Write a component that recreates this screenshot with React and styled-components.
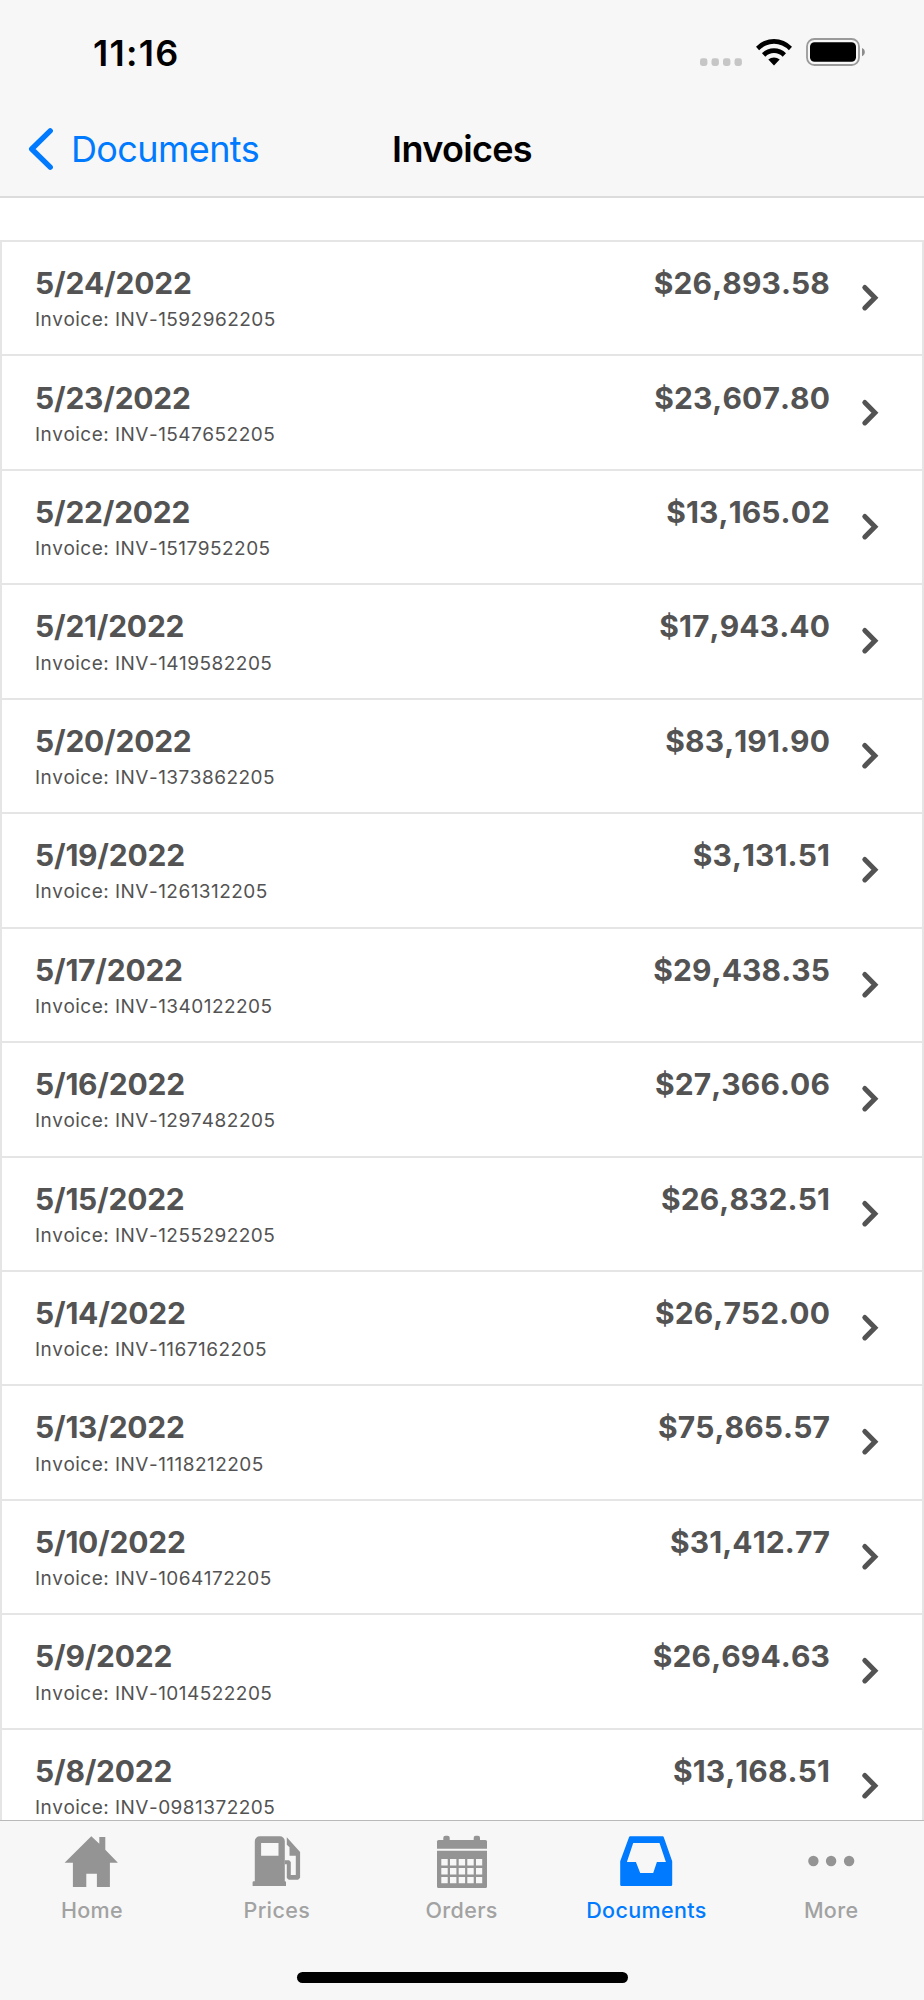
import React from 'react';
import styled, { createGlobalStyle } from 'styled-components'

const GlobalStyle = createGlobalStyle`
  * {
    box-sizing: border-box;
  }
  body {
    margin: 0;
    background: #ffffff;
    font-family: Inter, "Liberation Sans", sans-serif;
  }
`

const Screen = styled.div`
  display: flex;
  flex-direction: column;
  width: 924px;
  height: 2000px;
  overflow: hidden;
`

const Header = styled.header`
  flex-shrink: 0;
  height: 198px;
  background: #f7f7f7;
  border-bottom: 2px solid #dcdcdc;
`

const StatusBar = styled.div`
  display: flex;
  justify-content: space-between;
  align-items: flex-start;
  height: 97px;
  padding: 31px 59px 0 93px;
`

const Time = styled.span`
  font-size: 36px;
  line-height: 44px;
  font-weight: 600;
  letter-spacing: 1.25px;
  color: #000000;
`

const StatusIcons = styled.div`
  display: flex;
  gap: 14px;
  padding-top: 7px;
`

const NavBar = styled.nav`
  display: grid;
  grid-template-columns: 1fr auto 1fr;
  align-items: start;
  padding: 30px 27px 0;
`

const BackButton = styled.a`
  display: flex;
  gap: 18px;
  color: #007aff;
  font-size: 36px;
  line-height: 44px;
  letter-spacing: -0.62px;
`

const Title = styled.h1`
  margin: 0;
  font-size: 36px;
  line-height: 44px;
  font-weight: 600;
  letter-spacing: -0.68px;
  color: #000000;
`

const List = styled.ul`
  flex: 1;
  min-height: 0;
  overflow: hidden;
  margin: 0;
  padding: 42px 0 0;
  list-style: none;
  background: #ffffff;
  font-kerning: none;
`

const Row = styled.li`
  display: flex;
  align-items: flex-start;
  height: 114.45px;
  padding: 23.1px 42px 0 33px;
  border: 2px solid #e5e5e5;
  border-bottom: none;
  color: #535353;
`

const Info = styled.div`
  display: flex;
  flex-direction: column;
  flex-grow: 1;
`

const InvoiceDate = styled.span`
  font-size: 30px;
  line-height: 36px;
  font-weight: 650;
  letter-spacing: -0.22px;
`

const InvoiceNumber = styled.span`
  margin-top: 7.2px;
  font-size: 19px;
  line-height: 24px;
  letter-spacing: 0.47px;
`

const Amount = styled.span`
  font-size: 30px;
  line-height: 36px;
  font-weight: 650;
  letter-spacing: 0.1px;
`

const RowArrow = styled.svg`
  flex-shrink: 0;
  width: 20px;
  height: 36px;
  margin: 15px 0 0 30px;
`

const Footer = styled.footer`
  display: flex;
  flex-direction: column;
  justify-content: space-between;
  align-items: center;
  flex-shrink: 0;
  height: 180px;
  padding-bottom: 17px;
  background: #f7f7f7;
  border-top: 1px solid #b9b9b9;
`

const Tabs = styled.div`
  display: grid;
  grid-template-columns: repeat(5, 1fr);
  width: 100%;
  padding-top: 11px;
`

const Tab = styled.a`
  display: flex;
  flex-direction: column;
  align-items: center;
  gap: 7px;
  color: ${props => props.$active ? '#007aff' : '#949494'};
`

const TabLabel = styled.span`
  margin-right: 0.8px;
  font-size: 21.5px;
  line-height: 26px;
  font-weight: 500;
  letter-spacing: 0.36px;
  color: ${props => props.$active ? '#007aff' : '#a2a2a2'};
`

const HomeIndicator = styled.div`
  width: 331px;
  height: 11px;
  border-radius: 6px;
  background: #000000;
`

const TabSvg = ({ children }) => (
  <svg width="60" height="58" viewBox="0 0 60 58" fill="currentColor">{children}</svg>
)

const HomeIcon = () => (
  <TabSvg>
    <path d="M29.3 4.3 37.3 11.7V5h6v12.7L55.9 30.7h-8V55h-13V41.7H24.3V55H10.9V30.7H2.6Z" />
  </TabSvg>
)

const PumpIcon = () => (
  <TabSvg>
    <path
      fillRule="evenodd"
      d="M12.8 4.3h20a5 5 0 0 1 5 5v40h.3a1 1 0 0 1 .9 1V54H5.6v-3.7a1 1 0 0 1 1-1h1.2v-40a5 5 0 0 1 5-5ZM14.1 11v12.7h17.4V11Z"
    />
    <path d="M39.8 5.3 53.1 20v25.7l-2 2h-9.3l-2-1.7V32.3h-2v-4h4.3l1.7 1.7v13h5V23.7h-6.3V15.3l-2.7-2.6Z" />
  </TabSvg>
)

const CalendarIcon = () => (
  <TabSvg>
    <path d="M11.3 9V5.7a2 2 0 0 1 2-2h2.4a2 2 0 0 1 2 2V9ZM41.7 9V5.7a2 2 0 0 1 2-2H46a2 2 0 0 1 2 2V9Z" />
    <path d="M6.5 8h47A1.5 1.5 0 0 1 55 9.5v7.2H5V9.5A1.5 1.5 0 0 1 6.5 8Z" />
    <path
      fillRule="evenodd"
      d="M5 18.7h50v35.8a1.5 1.5 0 0 1-1.5 1.5h-47A1.5 1.5 0 0 1 5 54.5Z
      M9.3 27v6.6h6.4V27ZM18 27v6.6h6.4V27ZM26.7 27v6.6h6.4V27ZM35.3 27v6.6h6.4V27ZM44 27v6.6h6.2V27Z
      M9.3 36v6.6h6.4V36ZM18 36v6.6h6.4V36ZM26.7 36v6.6h6.4V36ZM35.3 36v6.6h6.4V36ZM44 36v6.6h6.2V36Z
      M9.3 45v6.2h6.4V45ZM18 45v6.2h6.4V45ZM26.7 45v6.2h6.4V45ZM35.3 45v6.2h6.4V45ZM44 45v6.2h6.2V45Z"
    />
  </TabSvg>
)

const InboxIcon = () => (
  <TabSvg>
    <path
      fillRule="evenodd"
      d="M13.2 4.3h32.4a1.3 1.3 0 0 1 1.2.9L55.2 29.3v23.4a1.3 1.3 0 0 1-1.3 1.3H4.5a1.3 1.3 0 0 1-1.3-1.3V29.3L12 5.2a1.3 1.3 0 0 1 1.2-.9ZM16.2 11 9.9 30h9l4.3 11h13l3.7-11h9L42.5 11Z"
    />
  </TabSvg>
)

const MoreIcon = () => (
  <TabSvg>
    <circle cx="11.4" cy="29" r="5.2" />
    <circle cx="29.1" cy="29" r="5.2" />
    <circle cx="47.1" cy="29" r="5.2" />
  </TabSvg>
)

const tabs = [
  { label: 'Home', Icon: HomeIcon },
  { label: 'Prices', Icon: PumpIcon },
  { label: 'Orders', Icon: CalendarIcon },
  { label: 'Documents', Icon: InboxIcon },
  { label: 'More', Icon: MoreIcon }
]

const invoices = [
  { date: '5/24/2022', number: 'INV-1592962205', amount: '$26,893.58' },
  { date: '5/23/2022', number: 'INV-1547652205', amount: '$23,607.80' },
  { date: '5/22/2022', number: 'INV-1517952205', amount: '$13,165.02' },
  { date: '5/21/2022', number: 'INV-1419582205', amount: '$17,943.40' },
  { date: '5/20/2022', number: 'INV-1373862205', amount: '$83,191.90' },
  { date: '5/19/2022', number: 'INV-1261312205', amount: '$3,131.51' },
  { date: '5/17/2022', number: 'INV-1340122205', amount: '$29,438.35' },
  { date: '5/16/2022', number: 'INV-1297482205', amount: '$27,366.06' },
  { date: '5/15/2022', number: 'INV-1255292205', amount: '$26,832.51' },
  { date: '5/14/2022', number: 'INV-1167162205', amount: '$26,752.00' },
  { date: '5/13/2022', number: 'INV-1118212205', amount: '$75,865.57' },
  { date: '5/10/2022', number: 'INV-1064172205', amount: '$31,412.77' },
  { date: '5/9/2022', number: 'INV-1014522205', amount: '$26,694.63' },
  { date: '5/8/2022', number: 'INV-0981372205', amount: '$13,168.51' }
]

class App extends React.Component {
  state = {
    activeTab: 'Documents'
  }

  onClickTab = (label) => {
    this.setState({ activeTab: label });
  }

  render() {
    return (
      <Screen>
        <GlobalStyle />
        <Header>
          <StatusBar>
            <Time>11:16</Time>
            <StatusIcons>
              <svg width="42" height="28" viewBox="0 0 42 28" fill="#c6c6c6">
                <rect x="0" y="20.3" width="7.4" height="7.6" rx="2.4" />
                <rect x="11.5" y="20.3" width="7.4" height="7.6" rx="2.4" />
                <rect x="23" y="20.3" width="7.4" height="7.6" rx="2.4" />
                <rect x="34.5" y="20.3" width="7.4" height="7.6" rx="2.4" />
              </svg>
              <svg width="36" height="28" viewBox="0 0 36 28" fill="#000000">
                <path d="M0 8.7A24.9 24.9 0 0 1 36 8.7L32.9 12.2A20.5 20.5 0 0 0 3.1 12.2Z" />
                <path d="M6 15.2A16.9 16.9 0 0 1 30 15.2L26.7 18.8A12 12 0 0 0 9.3 18.8Z" />
                <path d="M12.3 21.6A9 9 0 0 1 23.7 21.6L18 27.6Z" />
              </svg>
              <svg width="59" height="28" viewBox="0 0 59 28">
                <rect x="1" y="1" width="52" height="26" rx="7.5" fill="none" stroke="#9a9a9a" strokeWidth="1.8" />
                <rect x="4" y="4.3" width="46" height="19.5" rx="4.5" fill="#000000" />
                <path d="M56 10a4.4 4.4 0 0 1 0 8.2Z" fill="#8c8c8c" />
              </svg>
            </StatusIcons>
          </StatusBar>
          <NavBar>
            <BackButton>
              <svg width="26" height="44" viewBox="0 0 26 44" fill="none" stroke="currentColor" strokeWidth="5.4" strokeLinecap="round" strokeLinejoin="round">
                <path d="M23.2 3.8 4.7 22 23.2 40.2" />
              </svg>
              Documents
            </BackButton>
            <Title>Invoices</Title>
          </NavBar>
        </Header>
        <List>
          {invoices.map((invoice) => {
            return <Row key={invoice.number}>
              <Info>
                <InvoiceDate>{invoice.date}</InvoiceDate>
                <InvoiceNumber>Invoice: {invoice.number}</InvoiceNumber>
              </Info>
              <Amount>{invoice.amount}</Amount>
              <RowArrow viewBox="0 0 20 36" fill="none" stroke="currentColor" strokeWidth="5" strokeLinecap="round">
                <path d="M4.8 7.5 14.9 17.7 4.8 27.9" />
              </RowArrow>
            </Row>
          })}
        </List>
        <Footer>
          <Tabs>
            {tabs.map(({ label, Icon }) => (
              <Tab
                key={label}
                $active={this.state.activeTab === label}
                onClick={() => this.onClickTab(label)}
              >
                <Icon />
                <TabLabel $active={this.state.activeTab === label}>{label}</TabLabel>
              </Tab>
            ))}
          </Tabs>
          <HomeIndicator />
        </Footer>
      </Screen>
    );
  }
}

export default App;
